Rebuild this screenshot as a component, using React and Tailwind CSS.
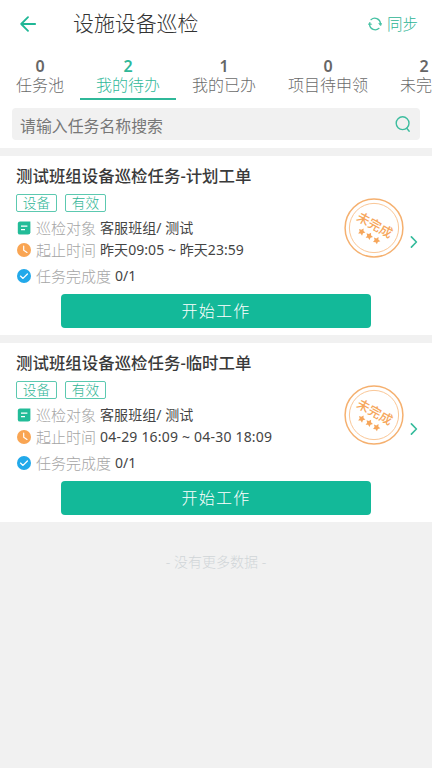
import React from 'react';

const tabs = [
    { count: 0, label: '任务池' },
    { count: 2, label: '我的待办', active: true },
    { count: 1, label: '我的已办' },
    { count: 0, label: '项目待申领' },
    { count: 2, label: '未完成' },
];

const tasks = [
    { title: '测试班组设备巡检任务-计划工单', target: '客服班组/ 测试', time: '昨天09:05 ~ 昨天23:59', progress: '0/1' },
    { title: '测试班组设备巡检任务-临时工单', target: '客服班组/ 测试', time: '04-29 16:09 ~ 04-30 18:09', progress: '0/1', wide: true },
];

function BackIcon() {
    return (
        <svg className="w-4 h-4" viewBox="0 0 16 16" fill="none" stroke="#1fb796" strokeWidth="1.8" strokeLinecap="round" strokeLinejoin="round">
            <path d="M15.2 8H1.2M8 1.2L1.2 8L8 14.8" />
        </svg>
    );
}

function SyncIcon() {
    return (
        <svg className="w-[14px] h-[14px]" viewBox="0 0 14 14" fill="none" stroke="#45c1a3" strokeWidth="1.2" strokeLinecap="round">
            <path d="M3 2.7A5.7 5.7 0 0 1 12.5 6.4" />
            <path d="M11 11.3A5.7 5.7 0 0 1 1.5 7.6" />
            <path d="M12.4 8.6L10.7 6.5H13.6Z" fill="#45c1a3" strokeWidth=".6" />
            <path d="M1.6 5.4L.4 7.5H3.3Z" fill="#45c1a3" strokeWidth=".6" />
        </svg>
    );
}

function SearchIcon() {
    return (
        <svg className="w-4 h-[17px]" viewBox="0 0 16 17" fill="none" stroke="#3dbd9f" strokeWidth="1.4" strokeLinecap="round">
            <circle cx="7.6" cy="7.2" r="6.4" />
            <path d="M11.7 12.2L14.2 15.3" />
        </svg>
    );
}

function TargetIcon() {
    return (
        <svg className="w-[14px] h-[14px]" viewBox="0 0 14 14">
            <path d="M3 .4H13.4V11.3Q13.4 13.6 11.1 13.6H3Q.8 13.6 .8 11.4V2.6Q.8 .4 3 .4Z" fill="#22bc98" />
            <path d="M4 5.1H10.4M4 8.6H8" stroke="#fff" strokeWidth="1.2" />
        </svg>
    );
}

function ClockIcon() {
    return (
        <svg className="w-[14px] h-[14px]" viewBox="0 0 14 14">
            <circle cx="7" cy="7" r="7" fill="#f9a553" />
            <path d="M6.7 3.2V7.2L10 9.4" fill="none" stroke="#fff" strokeWidth="1.2" strokeLinecap="round" />
        </svg>
    );
}

function DoneIcon() {
    return (
        <svg className="w-[14px] h-[14px]" viewBox="0 0 14 14">
            <circle cx="7" cy="7" r="7" fill="#22a9ea" />
            <path d="M3.5 7.1L6 9.4L10.4 5" fill="none" stroke="#fff" strokeWidth="1.3" strokeLinecap="round" strokeLinejoin="round" />
        </svg>
    );
}

function Star({ x, y }) {
    return (
        <path
            transform={`translate(${x} ${y}) rotate(30) scale(1.12)`}
            d="M0-3.4L1.1-1.3L3.3-1L1.7.7L2 2.9L0 1.9L-2 2.9L-1.7.7L-3.3-1L-1.1-1.3Z"
            fill="#f6a65b"
        />
    );
}

function Stamp() {
    return (
        <svg className="w-[60px] h-[60px] shrink-0" viewBox="0 0 60 60">
            <circle cx="30" cy="30" r="28.9" fill="none" stroke="#f5b06f" strokeWidth="1.5" />
            <circle cx="30" cy="30" r="24.6" fill="none" stroke="#f8c08a" strokeWidth=".9" />
            <text
                x="30.9"
                y="31.7"
                transform="rotate(29 30.9 27)"
                textAnchor="middle"
                fontSize="12.8"
                fontWeight="500"
                fill="#f6a65b"
            >
                未完成
            </text>
            <Star x={17.7} y={33.7} />
            <Star x={25.2} y={38} />
            <Star x={32.6} y={42.3} />
        </svg>
    );
}

function ChevronIcon() {
    return (
        <svg className="w-2 h-3 shrink-0" viewBox="0 0 8 12" fill="none" stroke="#35bb9c" strokeWidth="1.6" strokeLinecap="round" strokeLinejoin="round">
            <path d="M1.4 .9L6.4 6L1.4 11.1" />
        </svg>
    );
}

function Tag({ children }) {
    return (
        <span className="w-[41px] h-[18px] flex items-center justify-center border border-[#5cc9b0] rounded-[2px] text-[13.7px] leading-none font-light text-[#2fb596]">
            {children}
        </span>
    );
}

function InfoRow({ icon, label, value, wide, className }) {
    return (
        <div className={`flex items-center whitespace-nowrap leading-[22px] ${className}`}>
            {icon}
            <span className="ml-[5px] text-[15px] font-light text-[#a5a5a5]">{label}</span>
            <span className={`ml-1 text-[14px] text-[#444] ${wide ? 'tracking-[0.2px]' : 'tracking-[0.06px]'}`}>{value}</span>
        </div>
    );
}

function TaskCard({ task }) {
    return (
        <section className="h-[179px] bg-white pt-2 flex flex-col">
            <h2 className="pl-4 h-6 text-[16.45px] leading-6 font-medium text-[#3a3a3a] whitespace-nowrap">{task.title}</h2>
            <div className="flex">
                <div className="w-[344px] pl-4">
                    <div className="flex gap-2 mt-[6px]">
                        <Tag>设备</Tag>
                        <Tag>有效</Tag>
                    </div>
                    <div className="pl-px">
                        <InfoRow className="h-[22px] mt-[5px]" icon={<TargetIcon />} label="巡检对象" value={task.target} />
                        <InfoRow className="h-[22px]" icon={<ClockIcon />} label="起止时间" value={task.time} wide={task.wide} />
                        <InfoRow className="h-[22px] mt-1" icon={<DoneIcon />} label="任务完成度" value={task.progress} />
                    </div>
                </div>
                <div className="flex items-start pt-[10px]">
                    <Stamp />
                    <div className="pt-[38px] pl-[6px]">
                        <ChevronIcon />
                    </div>
                </div>
            </div>
            <button className="mt-[7px] ml-[61px] w-[310px] h-[34px] pb-px rounded-[4px] bg-[#13b999] text-white text-[16px] font-light tracking-[1.2px] leading-none">
                开始工作
            </button>
        </section>
    );
}

export default function App() {
    return (
        <div className="w-full h-screen overflow-hidden bg-[#f1f1f1] font-['Noto_Sans','Noto_Sans_CJK_SC',sans-serif]">
            <div className="bg-white h-[148px]">
                <header className="h-12 flex items-center pl-5 pr-[14px]">
                    <BackIcon />
                    <h1 className="ml-[37px] text-[20.9px] leading-8 text-[#333] -mt-[3px] font-light">设施设备巡检</h1>
                    <button className="ml-auto flex items-center gap-[5px] text-[15.5px] leading-6 font-light text-[#2cb494]">
                        <SyncIcon />
                        同步
                    </button>
                </header>
                <nav className="h-[52px] flex overflow-hidden">
                    {tabs.map((tab, i) => (
                        <div
                            key={i}
                            className={`shrink-0 h-full px-4 pt-2 flex flex-col items-center border-b-2 ${tab.active ? 'border-[#2fb899] text-[#2fb899]' : 'border-transparent text-[#6b6b6b]'}`}
                        >
                            <span className={`h-[19px] text-[16px] leading-5 font-semibold ${tab.active ? '' : 'text-[#666]'}`}>{tab.count}</span>
                            <span className="h-5 text-[16px] leading-5 font-light">{tab.label}</span>
                        </div>
                    ))}
                </nav>
                <div className="mt-2 mx-3 h-8 rounded-[4px] bg-[#f1f1f1] flex items-center justify-between pl-2 pr-[9px]">
                    <span className="text-[15.9px] leading-8 mt-1 text-[#777]">请输入任务名称搜索</span>
                    <SearchIcon />
                </div>
            </div>
            <main className="mt-2 flex flex-col gap-2">
                {tasks.map((task) => (
                    <TaskCard key={task.title} task={task} />
                ))}
            </main>
            <p className="mt-[30px] text-center text-[14px] leading-5 font-light text-[#d0d5d8]">- 没有更多数据 -</p>
        </div>
    );
}
